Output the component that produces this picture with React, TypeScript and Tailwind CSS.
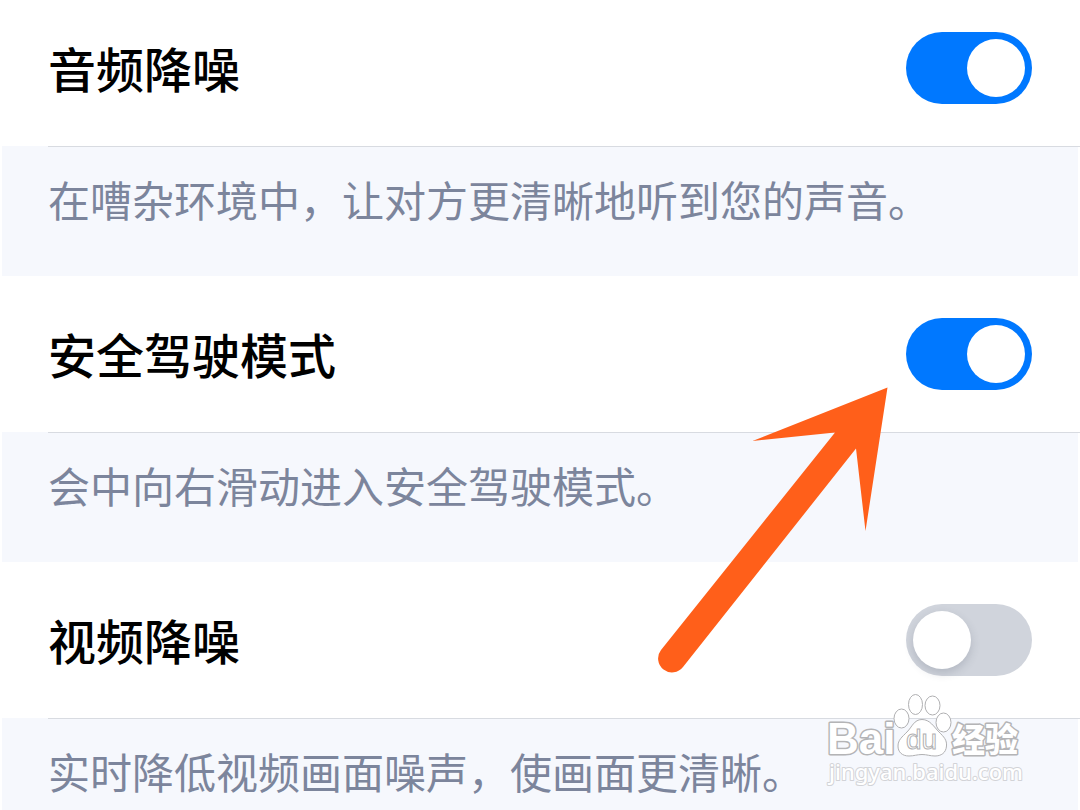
import { useState } from "react";
import { clsx } from "clsx";

interface Setting {
  id: string;
  title: string;
  note: string;
  enabled: boolean;
}

const initialSettings: Setting[] = [
  { id: "audio-denoise", title: "音频降噪", note: "在嘈杂环境中，让对方更清晰地听到您的声音。", enabled: true },
  { id: "safe-driving", title: "安全驾驶模式", note: "会中向右滑动进入安全驾驶模式。", enabled: true },
  { id: "video-denoise", title: "视频降噪", note: "实时降低视频画面噪声，使画面更清晰。", enabled: false },
];

interface SettingRowProps {
  setting: Setting;
  isFirst: boolean;
  onToggle: (id: string) => void;
}

function SettingRow({ setting, isFirst, onToggle }: SettingRowProps) {
  return (
    <section>
      <div className={clsx("flex items-center justify-between px-12 pb-[42px]", isFirst ? "pt-8" : "pt-[42px]")}>
        <label htmlFor={setting.id} className="pb-[2px] text-[48px] leading-[70px] font-medium text-black">
          {setting.title}
        </label>
        <input
          id={setting.id}
          type="checkbox"
          role="switch"
          checked={setting.enabled}
          onChange={() => onToggle(setting.id)}
          aria-describedby={`${setting.id}-note`}
          className="flex h-[72px] w-[126px] shrink-0 cursor-pointer appearance-none items-center rounded-full bg-[#d0d4dc] px-[7px] before:size-[58px] before:rounded-full before:bg-white before:shadow-[0_4px_10px_rgba(60,70,90,0.2)] checked:justify-end checked:bg-[#0078ff] checked:before:shadow-none"
        />
      </div>
      <div className="mx-[2px] bg-[#f6f8fd]">
        <div className="-mr-[2px] ml-[46px] h-px bg-[#d8dbe1]" />
        <p id={`${setting.id}-note`} className="px-[46px] pt-[22px] pb-[47px] text-[42px] leading-[60px] text-[#7c859c]">
          {setting.note}
        </p>
      </div>
    </section>
  );
}

// Points at the safe driving switch
function Arrow() {
  return (
    <svg viewBox="0 0 232 288" className="pointer-events-none absolute top-[386px] left-[657px] w-[232px]" aria-hidden="true">
      <path
        d="M230.500 1.500 L95.500 55 L178 46.500 L4 264 A13.700 13.700 0 0 0 26 281 L199 62.500 L208.500 145 Z"
        fill="#ff5f1a"
      />
    </svg>
  );
}

function Watermark() {
  return (
    <svg
      viewBox="0 0 200 98"
      className="pointer-events-none absolute top-[692px] left-[826px] w-[200px]"
      aria-label="Baidu 经验"
    >
      <g fill="#ffffff" stroke="#b4b4b6" strokeWidth="3" strokeLinejoin="round" style={{ paintOrder: "stroke" }}>
        <text x="1" y="62" className="font-['Liberation_Sans',sans-serif] text-[44px] font-bold">Bai</text>
        <text x="126" y="60" className="font-['Noto_Sans_CJK_SC',sans-serif] text-[33px] font-black">经验</text>
      </g>
      <g fill="#ffffff" stroke="#b0b0b2" strokeWidth="1">
        <ellipse cx="75.500" cy="26.500" rx="7.500" ry="9.500" />
        <ellipse cx="89.500" cy="12.500" rx="7" ry="10" />
        <ellipse cx="106.500" cy="13.500" rx="7.500" ry="9.500" />
        <ellipse cx="117.500" cy="30.500" rx="7.500" ry="9.500" />
        <path d="M96 27.500 C104 27.500 108 35 113 40 C118 45 121 48 120.500 54 C120 61 115 64 109 64 C104 64 101 62.500 96 62.500 C91 62.500 88 64 83 64 C76 64 72 60 72 54 C72 48 76 45 81 40 C86 35 88 27.500 96 27.500 Z" />
        <text x="80" y="57" className="font-['Liberation_Sans',sans-serif] text-[28px]">du</text>
      </g>
      <text
        x="3"
        y="88"
        fill="#ffffff"
        stroke="#d2d3d7"
        strokeWidth="2"
        strokeLinejoin="round"
        style={{ paintOrder: "stroke" }}
        className="font-['Noto_Sans',sans-serif] text-[22px] font-medium"
      >
        jingyan.baidu.com
      </text>
    </svg>
  );
}

export default function App() {
  const [settings, setSettings] = useState<Setting[]>(initialSettings);

  const handleToggle = (id: string) => {
    setSettings(prev => prev.map(item => (item.id === id ? { ...item, enabled: !item.enabled } : item)));
  };

  return (
    <main className="relative h-screen overflow-hidden bg-white font-['Noto_Sans_CJK_SC',sans-serif]">
      {settings.map((setting, index) => (
        <SettingRow key={setting.id} setting={setting} isFirst={index === 0} onToggle={handleToggle} />
      ))}
      <Arrow />
      <Watermark />
    </main>
  );
}
